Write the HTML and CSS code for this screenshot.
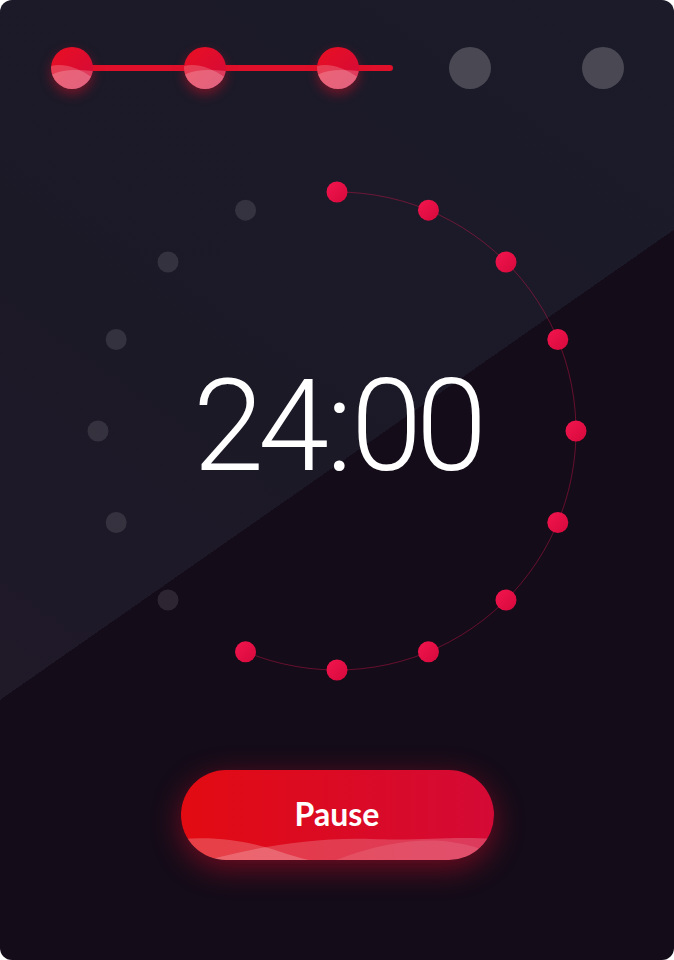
FILE: index.html
```html
<!DOCTYPE html>
<html lang="en">
<head>
<meta charset="utf-8">
<title>Pomodoro</title>
<link rel="stylesheet" href="styles.css">
</head>
<body>
<div class="screen">
  <div class="steps">
    <div class="step done">
      <svg viewBox="0 0 42 42" width="42" height="42"><defs><linearGradient id="sg" x1="0" y1="0" x2="1" y2="1"><stop offset="0" stop-color="#ea0f22"/><stop offset="1" stop-color="#d20a3a"/></linearGradient><clipPath id="sc"><circle cx="21" cy="21" r="21"/></clipPath></defs><circle cx="21" cy="21" r="21" fill="url(#sg)"/><g clip-path="url(#sc)" fill="#fff"><path d="M0,19 C12,16 26,20 42,31 L42,42 L0,42Z" fill-opacity="0.2"/><path d="M0,28 C14,21 28,23 42,24 L42,42 L0,42Z" fill-opacity="0.2"/></g></svg>
    </div>
    <div class="step done">
      <svg viewBox="0 0 42 42" width="42" height="42"><circle cx="21" cy="21" r="21" fill="url(#sg)"/><g clip-path="url(#sc)" fill="#fff"><path d="M0,19 C12,16 26,20 42,31 L42,42 L0,42Z" fill-opacity="0.2"/><path d="M0,28 C14,21 28,23 42,24 L42,42 L0,42Z" fill-opacity="0.2"/></g></svg>
    </div>
    <div class="step done">
      <svg viewBox="0 0 42 42" width="42" height="42"><circle cx="21" cy="21" r="21" fill="url(#sg)"/><g clip-path="url(#sc)" fill="#fff"><path d="M0,19 C12,16 26,20 42,31 L42,42 L0,42Z" fill-opacity="0.2"/><path d="M0,28 C14,21 28,23 42,24 L42,42 L0,42Z" fill-opacity="0.2"/></g></svg>
    </div>
    <div class="step"></div>
    <div class="step"></div>
  </div>

  <div class="clock">
    <svg class="ring" viewBox="0 0 500 500" width="500" height="500">
      <defs>
        <linearGradient id="rd" x1="0" y1="0" x2="1" y2="1"><stop offset="0" stop-color="#f3154e"/><stop offset="1" stop-color="#d6093c"/></linearGradient>
      </defs>
      <path d="M250,11 A239,239 0 1 1 158.54,470.81" fill="none" stroke="#e0144a" stroke-opacity="0.4" stroke-width="1"/>
      <g fill="url(#rd)">
        <circle cx="250" cy="11" r="10.5"/>
        <circle cx="341.46" cy="29.19" r="10.5"/>
        <circle cx="419" cy="81" r="10.5"/>
        <circle cx="470.81" cy="158.54" r="10.5"/>
        <circle cx="489" cy="250" r="10.5"/>
        <circle cx="470.81" cy="341.46" r="10.5"/>
        <circle cx="419" cy="419" r="10.5"/>
        <circle cx="341.46" cy="470.81" r="10.5"/>
        <circle cx="250" cy="489" r="10.5"/>
        <circle cx="158.54" cy="470.81" r="10.5"/>
      </g>
      <g fill="#fff" fill-opacity="0.11">
        <circle cx="81" cy="419" r="10.5"/>
        <circle cx="29.19" cy="341.46" r="10.5"/>
        <circle cx="11" cy="250" r="10.5"/>
        <circle cx="29.19" cy="158.54" r="10.5"/>
        <circle cx="81" cy="81" r="10.5"/>
        <circle cx="158.54" cy="29.19" r="10.5"/>
      </g>
    </svg>
    <div class="time">24<span class="colon">:</span>00</div>
  </div>

  <button class="pause" type="button">
    <span class="label">Pause</span>
    <svg class="waves" viewBox="0 0 313 90" width="313" height="90" preserveAspectRatio="none">
      <g fill="#fff">
        <path d="M0,69 C40,66 70,72 100,82 C115,87 125,90 140,92 L0,92Z" fill-opacity="0.22"/>
        <path d="M20,92 C70,78 130,67 190,69 C240,71 270,66 313,69 L313,92Z" fill-opacity="0.2"/>
        <path d="M150,92 C200,72 240,68 270,72 C290,75 305,80 313,84 L313,92Z" fill-opacity="0.1"/>
      </g>
    </svg>
  </button>
</div>
</body>
</html>
```

FILE: styles.css
```css
* { box-sizing: border-box; }

body {
  margin: 0;
  background: #ffffff;
}

.screen {
  width: 674px;
  height: 960px;
  border-radius: 12px;
  overflow: hidden;
  background:
    linear-gradient(145.1deg, rgba(20,12,25,0) 574px, #140c19 574px),
    linear-gradient(215deg, #1b1b2a 0%, #1c1927 50%, #211929 100%);
  display: flex;
  flex-direction: column;
}

.steps {
  position: relative;
  margin-top: 47px;
  padding: 0 50px 0 51px;
  height: 42px;
  display: flex;
  justify-content: space-between;
}

.steps::before {
  content: "";
  position: absolute;
  left: 72px;
  top: 18px;
  width: 321px;
  height: 6px;
  border-radius: 0 3px 3px 0;
  background: #e0102a;
}

.step {
  position: relative;
  z-index: 1;
  width: 42px;
  height: 42px;
  border-radius: 50%;
  background: #4a4953;
}

.step svg { display: block; }

.step.done {
  background: transparent;
  box-shadow: 0 5px 12px rgba(225, 15, 40, 0.45);
}

.clock {
  width: 500px;
  height: 500px;
  margin: 92px auto 0;
  display: grid;
}

.ring, .time {
  grid-area: 1 / 1;
}

.ring { display: block; }

.time {
  align-self: center;
  justify-self: center;
  margin-top: -10px;
  font-family: Roboto, "Liberation Sans", sans-serif;
  font-weight: 300;
  font-size: 128px;
  letter-spacing: -6px;
  color: #ffffff;
  line-height: 1;
}

.colon {
  margin: 0 4px 0 3px;
}

.pause {
  position: relative;
  overflow: hidden;
  display: block;
  width: 313px;
  height: 90px;
  margin: 89px auto 0;
  padding: 0;
  border: none;
  border-radius: 45px;
  background: linear-gradient(90deg, #e20b12 0%, #d40a36 100%);
  box-shadow: 0 8px 30px rgba(230, 10, 40, 0.45);
  color: #ffffff;
  font-family: Lato, "Open Sans", sans-serif;
  font-weight: 700;
  font-size: 32px;
  cursor: pointer;
}

.pause .label {
  position: relative;
  z-index: 1;
  top: -2px;
}

.waves {
  position: absolute;
  left: 0;
  top: 0;
  display: block;
}
```
